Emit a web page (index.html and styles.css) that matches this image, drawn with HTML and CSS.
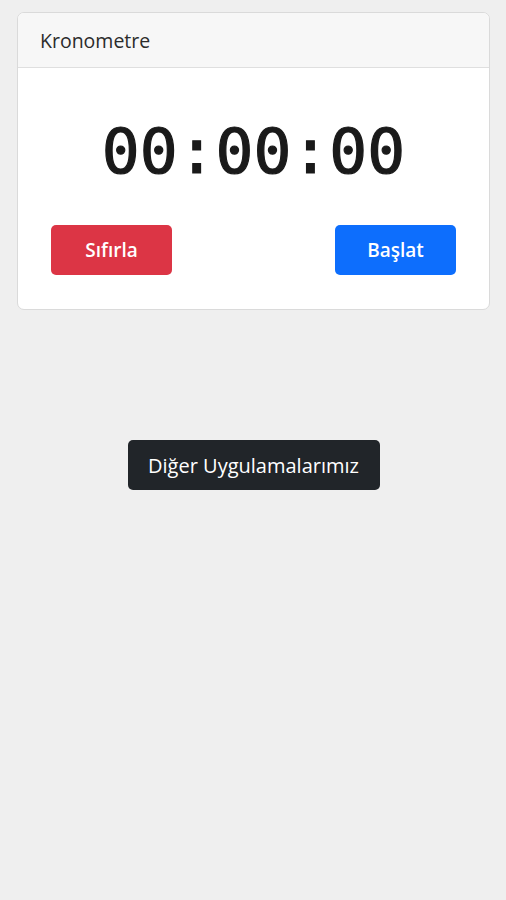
FILE: index.html
```html
<!DOCTYPE html>
<html lang="tr">
<head>
<meta charset="utf-8">
<title>Kronometre</title>
<link rel="stylesheet" href="styles.css">
</head>
<body>
<main class="page">
  <section class="card">
    <header class="card-header">Kronometre</header>
    <div class="card-body">
      <div class="timer">00:00:00</div>
      <div class="actions">
        <button class="btn btn-red">Sıfırla</button>
        <button class="btn btn-blue">Başlat</button>
      </div>
    </div>
  </section>
  <div class="more">
    <button class="btn btn-dark">Diğer Uygulamalarımız</button>
  </div>
</main>
</body>
</html>
```
FILE: styles.css
```css
html, body {
  margin: 0;
  padding: 0;
  background: #efefef;
  font-family: "Open Sans", "Noto Sans", sans-serif;
}
.page {
  padding: 12px 16px 0 17px;
}
.card {
  background: #fff;
  border: 1px solid #dadada;
  border-radius: 7px;
  overflow: hidden;
}
.card-header {
  background: #f7f7f7;
  border-bottom: 1px solid #dfdfdf;
  height: 55px;
  box-sizing: border-box;
  padding: 0 0 0 22px;
  display: flex;
  align-items: center;
  font-size: 19.5px;
  color: #2b2b2b;
}
.card-body {
  padding: 0 33px 34px 33px;
}
.timer {
  font-family: "DejaVu Sans Mono", monospace;
  font-weight: normal;
  -webkit-text-stroke: 1.2px #1a1a1a;
  font-size: 63px;
  line-height: 1;
  text-align: center;
  color: #1a1a1a;
  padding: 52px 0 42px;
}
.actions {
  display: flex;
  justify-content: space-between;
}
.btn {
  font-family: "Open Sans", "Noto Sans", sans-serif;
  border: none;
  border-radius: 5px;
  color: #fff;
  font-size: 19px;
  font-weight: 600;
  height: 50px;
  width: 121px;
  padding: 0;
  cursor: pointer;
}
.btn-red { background: #dc3545; }
.btn-blue { background: #0d6efd; }
.more {
  display: flex;
  justify-content: center;
  padding-top: 130px;
}
.btn-dark {
  background: #212529;
  width: 252px;
  height: 50px;
  font-weight: 500;
  font-size: 20px;
}
```
